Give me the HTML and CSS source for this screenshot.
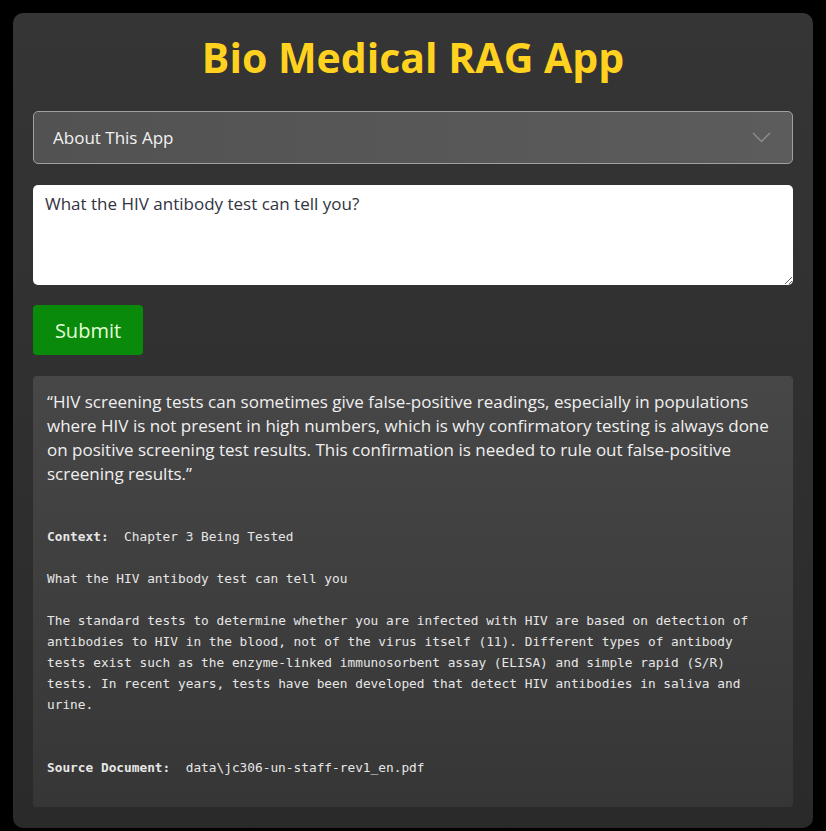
FILE: index.html
```html
<!DOCTYPE html>
<html lang="en">
<head>
<meta charset="utf-8">
<title>Bio Medical RAG App</title>
<link rel="stylesheet" href="styles.css">
</head>
<body>
<main class="card">
  <h1 class="title">Bio Medical RAG App</h1>
  <details class="about">
    <summary class="about-head">
      <span>About This App</span>
      <svg class="chevron" width="19" height="11" viewBox="0 0 19 11"><polyline points="1,1 9.5,9.5 18,1" fill="none" stroke="#8c8c8c" stroke-width="1.4"/></svg>
    </summary>
  </details>
  <textarea class="query">What the HIV antibody test can tell you?</textarea>
  <div class="actions"><button class="submit">Submit</button></div>
  <section class="result">
    <p class="answer">“HIV screening tests can sometimes give false-positive readings, especially in populations where HIV is not present in high numbers, which is why confirmatory testing is always done on positive screening test results. This confirmation is needed to rule out false-positive screening results.”</p>
    <div class="context">
      <div class="mono-line"><b class="label">Context:</b><span>Chapter 3 Being Tested</span></div>
      <div class="mono-line gap">What the HIV antibody test can tell you</div>
      <p class="mono-para gap">The standard tests to determine whether you are infected with HIV are based on detection of antibodies to HIV in the blood, not of the virus itself (11). Different types of antibody tests exist such as the enzyme-linked immunosorbent assay (ELISA) and simple rapid (S/R) tests. In recent years, tests have been developed that detect HIV antibodies in saliva and urine.</p>
      <div class="mono-line gap2"><b class="label">Source Document:</b><span>data\jc306-un-staff-rev1_en.pdf</span></div>
    </div>
  </section>
</main>
</body>
</html>
```
FILE: styles.css
```css
html, body {
  margin: 0;
  padding: 0;
  background: #000;
}
body {
  padding: 13px 13px 3px 13px;
  font-family: "Open Sans", "Noto Sans", sans-serif;
}
.card {
  width: 800px;
  height: 815px;
  box-sizing: border-box;
  border-radius: 10px;
  background: linear-gradient(#353535, #2a2a2a);
  padding: 14px 20px 21px 20px;
  display: flex;
  flex-direction: column;
}
.title {
  margin: 0;
  height: 60px;
  line-height: 60px;
  text-align: center;
  font-size: 41px;
  font-weight: 700;
  color: #ffd21f;
}
.about {
  margin-top: 24px;
  height: 53px;
  box-sizing: border-box;
  border: 1px solid #a0a0a0;
  border-radius: 5px;
  background: linear-gradient(90deg, #525252, #5c5c5c);
}
.about-head {
  list-style: none;
  height: 51px;
  display: flex;
  align-items: center;
  justify-content: space-between;
  padding: 0 21px 0 19px;
  color: #f2f2f2;
  font-size: 17px;
  cursor: pointer;
}
.about-head::-webkit-details-marker { display: none; }
.chevron { display: block; }
.query {
  margin-top: 21px;
  height: 100px;
  box-sizing: border-box;
  width: 100%;
  border: none;
  border-radius: 5px;
  background: #fff;
  padding: 7px 12px;
  font-family: "Open Sans", "Noto Sans", sans-serif;
  font-size: 17px;
  color: #31333f;
  resize: vertical;
  outline: none;
}
.actions {
  margin-top: 20px;
  display: flex;
}
.submit {
  width: 110px;
  height: 50px;
  border: none;
  border-radius: 4px;
  background: #098a0b;
  color: #e4ffd8;
  font-family: "Open Sans", "Noto Sans", sans-serif;
  font-size: 20px;
  font-weight: 500;
}
.result {
  margin-top: 21px;
  flex: 1;
  border-radius: 4px;
  background: linear-gradient(#474747, #363636);
  padding: 14px 14px 0 14px;
}
.answer {
  margin: 0;
  font-size: 17px;
  line-height: 24px;
  color: #f0f0f0;
}
.context {
  margin-top: 40px;
  padding-right: 20px;
  font-family: "DejaVu Sans Mono", monospace;
  font-size: 12.8px;
  line-height: 21px;
  color: #e6e6e6;
}
.mono-line {
  display: flex;
  white-space: pre;
}
.mono-para {
  margin: 0;
}
.gap { margin-top: 21px; }
.gap2 { margin-top: 42px; }
.label {
  font-weight: 700;
  margin-right: 15.4px;
}
```
